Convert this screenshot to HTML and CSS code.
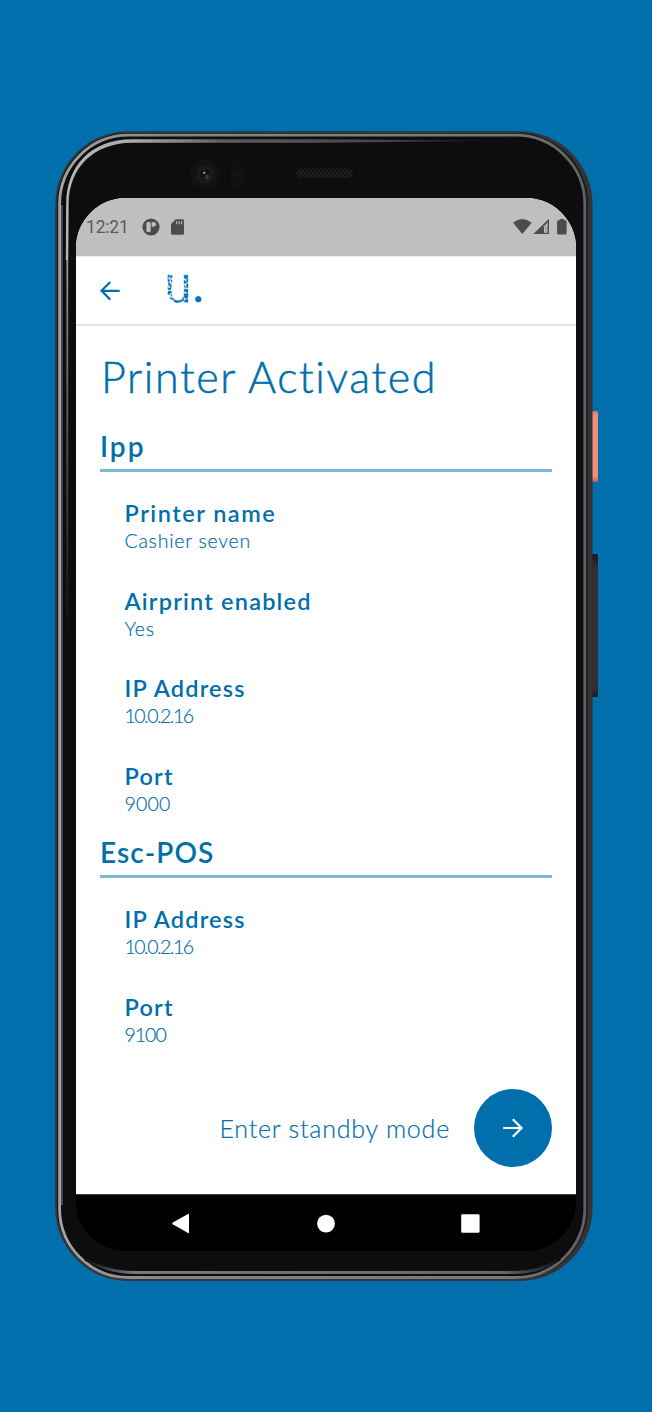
FILE: index.html
```
<!DOCTYPE html>
<html lang="en">
<head>
<meta charset="utf-8">
<title>Printer Activated</title>
<link rel="stylesheet" href="styles.css">
</head>
<body>
<div class="phone">
  <svg class="shell" width="546" height="1152" viewBox="54 130 546 1152" aria-hidden="true">
    <defs>
      <linearGradient id="rim" x1="0" y1="0" x2="1" y2="0">
        <stop offset="0" stop-color="#a4a4a4"/><stop offset=".2" stop-color="#858585"/><stop offset=".85" stop-color="#777779"/><stop offset="1" stop-color="#606062"/>
      </linearGradient>
      <linearGradient id="ridge" gradientUnits="userSpaceOnUse" x1="70" y1="0" x2="510" y2="0">
        <stop offset="0" stop-color="#b5b5b5"/><stop offset=".15" stop-color="#aaa"/><stop offset=".35" stop-color="#5c5c5c"/><stop offset=".7" stop-color="#484848"/><stop offset="1" stop-color="#0d0d0f"/>
      </linearGradient>
      <linearGradient id="ridgeSide" gradientUnits="userSpaceOnUse" x1="0" y1="205" x2="0" y2="640">
        <stop offset="0" stop-color="#b0b0b0"/><stop offset=".3" stop-color="#777"/><stop offset="1" stop-color="#0d0d0f"/>
      </linearGradient>
      <linearGradient id="chin" gradientUnits="userSpaceOnUse" x1="85" y1="0" x2="560" y2="0">
        <stop offset="0" stop-color="#0d0d0f"/><stop offset=".1" stop-color="#77777a"/><stop offset=".88" stop-color="#68686a"/><stop offset="1" stop-color="#0d0d0f"/>
      </linearGradient>
      <linearGradient id="power" x1="0" y1="0" x2="0" y2="1">
        <stop offset="0" stop-color="#d9705a"/><stop offset=".06" stop-color="#f0907a"/><stop offset=".92" stop-color="#f0907a"/><stop offset="1" stop-color="#bd5f4c"/>
      </linearGradient>
      <linearGradient id="volume" x1="0" y1="0" x2="0" y2="1">
        <stop offset="0" stop-color="#171717"/><stop offset=".1" stop-color="#303030"/><stop offset=".93" stop-color="#303030"/><stop offset="1" stop-color="#1c1c1c"/>
      </linearGradient>
      <pattern id="mesh" width="4" height="4" patternUnits="userSpaceOnUse">
        <rect width="4" height="4" fill="#131313"/><path d="M0 0h2v2H0zM2 2h2v2H2z" fill="#1e1e1e"/>
      </pattern>
    </defs>
    <rect x="590" y="411" width="8" height="71" rx="1.5" fill="url(#power)"/>
    <rect x="590" y="554" width="8" height="143" rx="1.5" fill="url(#volume)"/>
    <rect x="55.3" y="131.3" width="537.2" height="1149.7" rx="73" fill="#333335"/>
    <rect x="57" y="133" width="531" height="1145.5" rx="71" fill="#19191a"/>
    <rect x="59.6" y="135.2" width="525.2" height="1142.3" rx="69" fill="#0d0d0f" stroke="url(#rim)" stroke-width="2.8"/>
    <path d="M62 1205V205" fill="none" stroke="#59595b" stroke-width="1.6"/>
    <path d="M85 1259C100 1268 115 1272.5 135 1272.5H515C535 1272.5 548 1267 560 1259" fill="none" stroke="url(#chin)" stroke-width="3"/>
    <path d="M67.3 640V206" fill="none" stroke="url(#ridgeSide)" stroke-width="1.8"/>
    <path d="M65.8 260L66.2 204C66.2 166 91 139.2 132 139.2H320L510 140.8L320 142.8H132C93 143.2 69 168 68.6 204L68.1 260z" fill="url(#ridge)"/>
    <circle cx="205" cy="174.5" r="15" fill="#121213"/><circle cx="205" cy="174.5" r="9" fill="#1a1a1b"/>
    <circle cx="205" cy="174.5" r="5" fill="#101116"/><circle cx="207" cy="177" r="2.3" fill="#30344d"/><circle cx="204.3" cy="172.8" r="1.2" fill="#8b8b91"/>
    <rect x="231" y="161" width="13" height="28" rx="6.5" fill="#121213"/><circle cx="237.5" cy="167" r="4.5" fill="#0f0f10"/><circle cx="237.5" cy="182" r="4.5" fill="#0f0f10"/>
    <rect x="296" y="168.5" width="57" height="9.5" rx="4.7" fill="url(#mesh)"/>
  </svg>
  <div class="screen">
    <div class="status">
      <span class="clock">12:21</span>
      <svg class="badge" width="18" height="18" viewBox="0 0 18 18"><circle cx="9" cy="9" r="8.6" fill="#4c4c4c"/><rect x="4.4" y="4" width="4.3" height="10" rx="1.6" fill="#bfbfbf"/><path d="M9.6 4.4Q13.7 3.2 14 6.4Q13.7 9.3 9.6 8.5z" fill="#bfbfbf"/></svg>
      <svg class="card" width="13" height="16" viewBox="0 0 13 16"><path d="M4.7.2H11.5Q13 .2 13 1.7V14.3Q13 15.8 11.5 15.8H1.5Q0 15.8 0 14.3V5z" fill="#4c4c4c"/><path d="M5.7 2.3v3M8.2 2.3v3M10.6 2.3v3" stroke="#bfbfbf" stroke-width="1.1"/></svg>
      <svg class="signals" width="56" height="18" viewBox="512 218 56 18"><path d="M513 222.7Q522.3 215.3 531.7 222.7L522.3 234z" fill="#4c4c4c"/><path d="M533.3 234L549 218.7V234z" fill="#4c4c4c"/><path d="M544 226.3L547.6 222.5V232.7H544z" fill="#bfbfbf"/><path d="M545.4 226h1v6.3h-1z" fill="#8b8b8b"/><path d="M559.7 219H564v1.3H565.4Q566.6 220.3 566.6 221.5V233.3Q566.6 234.6 565.4 234.6H558.4Q557.1 234.6 557.1 233.3V221.5Q557.1 220.3 558.4 220.3H559.7z" fill="#4c4c4c"/></svg>
    </div>
    <header class="bar">
      <svg class="back" width="20" height="20" viewBox="0 0 20 20"><path d="M19.7 9.8H1.8M10.3 1L1.5 9.8L10.3 18.6" fill="none" stroke="#006fab" stroke-width="2.2"/></svg>
      <svg class="logo" width="38" height="30" viewBox="166 274 38 30" role="img" aria-label="Logo">
        <g fill="#0876be" stroke="#0876be" stroke-width=".45">
          <path d="M168 275h1.7l-.5 2.2-1.4.8zM170.3 275.8l1.8-.6v2.5l-1-.3-.8 1.5zM167.8 279l1.4.3.9 1.4-2 1.6zM170.9 279.4l1.3 1.2-.8 2.3zM168.2 283.3l1.3-.7 1.4 2.2-2.4.8zM169.1 286.2l2.6-1.4-.8 2.7zM167.7 287.5l1.7.8 1.8-.8-.6 2.4-2.4-.4zM168.1 291.2l2.5-.3 1.3 2-2 .4-.7 1.8-1.4-1.5zM170.7 294.4l1.3.5-.7 1.8z"/>
          <path d="M184 275.3h4v2.2l-1.3.5-.5 1.2-2.2-1.2zM186.9 279l1.1-.5v3.2l-1.5.5zM184 280.4l1.4.4 1 1.9-2.3 1zM186.8 283.2l1.2.6v3.8l-1.7-.2zM184 285l1.6 1.5-.5 1.7zM184.2 289l3.8.2v3.1l-1.2.6-.8-1.5-1.8.5zM184 293.2l2.1.7 1.9-.7v4.4l-2.2 1.2-1.7-1.9zM185 300.1l3-1.2v3.4l-4-.4z"/>
          <path d="M169.8 297.2l1.5 1 1.7-.5 1.1 2.2-3.5-.8zM174.7 299.7l2.7 1 4-.7 2.6-1.5v1.7l-3.4 1.8-4.1.7-3-1.5zM183.2 297.2l.8.5-2 1.4z"/>
          <circle cx="198.3" cy="299.2" r="2.9"/>
        </g>
      </svg>
    </header>
    <main class="content">
      <h1>Printer Activated</h1>
      <section>
        <h2 class="ipp">Ipp</h2>
        <dl>
          <div><dt class="name">Printer name</dt><dd>Cashier seven</dd></div>
          <div><dt>Airprint enabled</dt><dd>Yes</dd></div>
          <div><dt>IP Address</dt><dd class="ip">10.0.2.16</dd></div>
          <div><dt>Port</dt><dd class="num">9000</dd></div>
        </dl>
      </section>
      <section>
        <h2>Esc-POS</h2>
        <dl>
          <div><dt>IP Address</dt><dd class="ip">10.0.2.16</dd></div>
          <div><dt>Port</dt><dd class="num tight">9100</dd></div>
        </dl>
      </section>
      <div class="standby">
        <span>Enter standby mode</span>
        <button aria-label="Enter standby mode"><svg width="20" height="20" viewBox="0 0 20 20"><path d="M.2 10H18.2M9.8 1.2L18.5 10L9.8 18.8" fill="none" stroke="#fff" stroke-width="2.2"/></svg></button>
      </div>
    </main>
    <nav class="nav">
      <svg width="499" height="56" viewBox="76 1195 499 56"><path d="M172.8 1222.5L188 1213.9Q189 1213.4 189 1214.6V1232.3Q189 1233.5 188 1233L172.8 1224.3Q171.6 1223.4 172.8 1222.5z" fill="#fff"/><circle cx="326" cy="1223.6" r="8.9" fill="#fff"/><rect x="461.2" y="1214.3" width="18.4" height="18.4" rx="1.3" fill="#fff"/></svg>
    </nav>
  </div>
</div>
</body>
</html>
```
FILE: styles.css
```
* { box-sizing: border-box; }
body { display: flow-root; margin: 0; background: #006fab; height: 1412px; overflow: hidden; font-family: Lato, sans-serif; color: #006fab; }
h1, h2, dl, dd { margin: 0; }
svg { display: block; flex: none; }
.phone { position: relative; width: 546px; height: 1152px; margin: 130px 0 0 54px; padding: 68px 0 0 22px; }
.shell { position: absolute; left: 0; top: 0; }
.screen { position: relative; width: 499.5px; height: 1053px; border-radius: 50px; overflow: hidden; background: linear-gradient(#fff 80%, #000 80%); display: flex; flex-direction: column; }
.status { height: 58px; flex: none; background: #bfbfbf; display: flex; align-items: center; padding: 0 8px 0 10px; color: #5a5a5a; font: 17.5px Roboto, sans-serif; }
.clock { width: 55.5px; letter-spacing: -.2px; }
.card { margin-left: 11px; }
.signals { margin-left: auto; }
.bar { height: 70px; flex: none; border-bottom: 2px solid #e3e3e3; border-top: 1px solid #eee; display: flex; padding: 18px 24px 0; }
.back { margin-top: 6px; }
.logo { margin-left: 46px; margin-top: -1px; }
.content { flex: 1; min-height: 0; display: flex; flex-direction: column; padding: 25px 23.5px 27px 24px; background: #fff; }
h1 { font-size: 43px; line-height: 52px; font-weight: 300; margin-bottom: 24px; white-space: nowrap; letter-spacing: 1.6px; padding-left: 1px; -webkit-text-stroke: .5px #006fab; }
section + section { margin-top: 18.5px; }
h2 { height: 45px; margin-bottom: 26px; border-bottom: 3px solid #80b7d4; font-size: 28px; line-height: 39px; font-weight: 600; letter-spacing: 1.1px; }
.ipp { letter-spacing: 2px; }
dl { display: flex; flex-direction: column; gap: 33.5px; padding-left: 24.5px; }
dl > div { height: 54px; }
dt { font-size: 23.5px; line-height: 30px; font-weight: 600; letter-spacing: 1.2px; }
.name { letter-spacing: 1.5px; }
dd { font-size: 19.5px; line-height: 26px; font-weight: 300; letter-spacing: .75px; -webkit-text-stroke: .2px #006fab; }
.ip { letter-spacing: -1.5px; }
.num { letter-spacing: .2px; }
.num.tight { letter-spacing: -1px; }
.standby { margin-top: auto; display: flex; justify-content: flex-end; align-items: center; gap: 24px; font-size: 25px; font-weight: 300; letter-spacing: .8px; white-space: nowrap; -webkit-text-stroke: .2px #006fab; }
button { width: 78px; height: 78px; padding: 0; border: 0; border-radius: 50%; background: #006fab; display: grid; place-items: center; }
.nav { height: 57px; flex: none; background: #000; border-top: 1px solid #444; }
```
